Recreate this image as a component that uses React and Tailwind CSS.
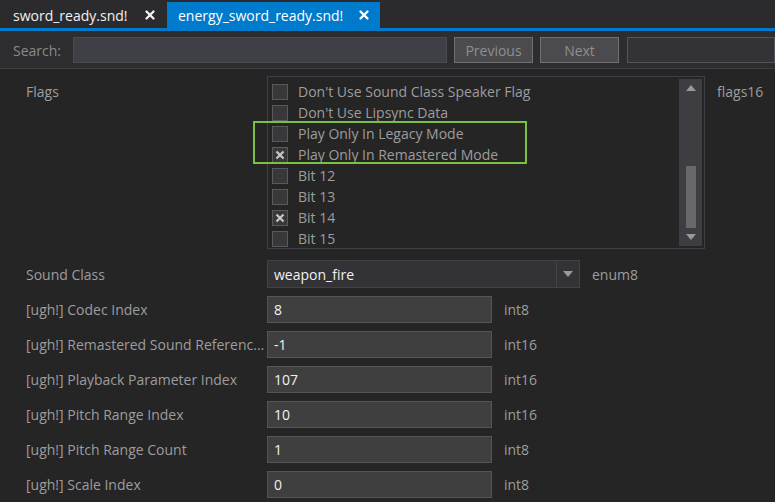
import { X } from "lucide-react";

const font = { fontFamily: '"Open Sans", "Noto Sans", sans-serif' };

const flags = [
  { label: "Don't Use Sound Class Speaker Flag", checked: false },
  { label: "Don't Use Lipsync Data", checked: false },
  { label: "Play Only In Legacy Mode", checked: false },
  { label: "Play Only In Remastered Mode", checked: true },
  { label: "Bit 12", checked: false },
  { label: "Bit 13", checked: false },
  { label: "Bit 14", checked: true },
  { label: "Bit 15", checked: false },
];

const fields = [
  { label: "[ugh!] Codec Index", value: "8", type: "int8" },
  { label: "[ugh!] Remastered Sound Referenc...", value: "-1", type: "int16" },
  { label: "[ugh!] Playback Parameter Index", value: "107", type: "int16" },
  { label: "[ugh!] Pitch Range Index", value: "10", type: "int16" },
  { label: "[ugh!] Pitch Range Count", value: "1", type: "int8" },
  { label: "[ugh!] Scale Index", value: "0", type: "int8" },
];

function Checkbox({ checked }) {
  return (
    <div className="w-[16px] h-[16px] border border-[#5a5a5a] bg-[#38383b] flex items-center justify-center">
      {checked && (
        <svg width="10" height="10" viewBox="0 0 10 10">
          <path d="M1.5 1.5 L8.5 8.5 M8.5 1.5 L1.5 8.5" stroke="#c8c8c8" strokeWidth="2.2" />
        </svg>
      )}
    </div>
  );
}

export default function App() {
  return (
    <div style={font} className="w-[775px] h-[502px] bg-[#252526] overflow-hidden text-[14px]">
      <div className="h-[28px] bg-[#2b2b2e] flex items-end">
        <div className="h-[26px] w-[167px] flex items-center pl-[13px] text-[#f1f1f1]">
          <span>sword_ready.snd!</span>
          <X size={14} strokeWidth={4} className="ml-auto mr-[10px] text-[#f1f1f1]" />
        </div>
        <div className="h-[26px] w-[213px] flex items-center pl-[11px] bg-[#007acc] text-white">
          <span>energy_sword_ready.snd!</span>
          <X size={14} strokeWidth={4} className="ml-auto mr-[9px] text-white" />
        </div>
      </div>
      <div className="h-[3px] bg-[#007acc]" />
      <div className="h-[38px] bg-[#2d2d30] border-b border-[#3f3f46] flex items-center pl-[13px] gap-[7px] pt-[1px]">
        <span className="text-[#8a8a8a] w-[53px]">Search:</span>
        <div className="w-[374px] h-[26px] bg-[#3f3f46] border border-[#4a4a4f]" />
        <div className="w-[79px] h-[26px] bg-[#4a4a4f] border border-[#707070] text-[#8f8f8f] flex items-center justify-center">Previous</div>
        <div className="w-[79px] h-[26px] bg-[#4a4a4f] border border-[#707070] text-[#8f8f8f] flex items-center justify-center">Next</div>
        <div className="ml-[1px] flex-1 h-[26px] bg-[#333337] border border-[#555559]" />
      </div>

      <div className="relative pt-[7px]">
        <div className="flex">
          <div className="w-[267px] pl-[26px] pt-[5px] text-[#9d9d9d]">Flags</div>
          <div className="w-[438px] h-[173px] border border-[#3f3f46] flex">
            <div className="flex-1 flex flex-col pt-[4px] pl-[4px]">
              {flags.map((f) => (
                <div key={f.label} className="h-[21.15px] flex items-center gap-[10px] text-[#9d9d9d]">
                  <Checkbox checked={f.checked} />
                  <span>{f.label}</span>
                </div>
              ))}
            </div>
            <div className="w-[23px] my-[2px] mr-[2px] bg-[#3e3e42] flex flex-col items-center justify-between py-[6px]">
              <svg width="10" height="6" viewBox="0 0 10 6"><path d="M0 6 L5 0 L10 6 Z" fill="#999" /></svg>
              <div className="w-[10px] h-[62px] bg-[#686868] mt-[69px]" />
              <svg width="10" height="6" viewBox="0 0 10 6"><path d="M0 0 L5 6 L10 0 Z" fill="#999" /></svg>
            </div>
          </div>
          <div className="pl-[12px] pt-[5px] text-[#9d9d9d]">flags16</div>
        </div>
        <div className="absolute left-[253px] top-[52px] w-[274px] h-[43px] border-2 border-[#7ac143]" />

        <div className="flex items-center mt-[11px] h-[28px]">
          <div className="w-[267px] pl-[26px] text-[#9d9d9d]">Sound Class</div>
          <div className="w-[313px] h-[28px] bg-[#333337] border border-[#434346] flex">
            <div className="flex-1 pl-[6px] flex items-center text-[#f1f1f1]">weapon_fire</div>
            <div className="w-[23px] border-l border-[#434346] flex items-center justify-center">
              <svg width="10" height="6" viewBox="0 0 10 6"><path d="M0 0 L5 6 L10 0 Z" fill="#999" /></svg>
            </div>
          </div>
          <div className="pl-[12px] text-[#9d9d9d]">enum8</div>
        </div>

        <div className="flex flex-col gap-[8px] mt-[8px]">
          {fields.map((f) => (
            <div key={f.label} className="flex items-center h-[27px]">
              <div className="w-[267px] pl-[26px] text-[#9d9d9d] whitespace-nowrap overflow-hidden">{f.label}</div>
              <div className="w-[225px] h-[27px] bg-[#3f3f3f] border border-[#555555] pl-[6px] flex items-center text-[#f1f1f1]">{f.value}</div>
              <div className="pl-[12px] text-[#9d9d9d]">{f.type}</div>
            </div>
          ))}
        </div>
      </div>
    </div>
  );
}
